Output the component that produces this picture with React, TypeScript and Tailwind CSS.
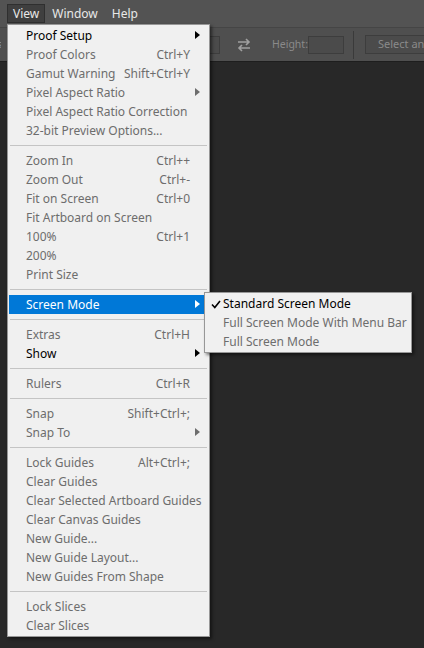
import { ReactNode } from 'react'

type Item = { label: string; shortcut?: string; enabled?: boolean; sub?: boolean; active?: boolean }
type Entry = Item | 'sep'

const items: Entry[] = [
  { label: 'Proof Setup', enabled: true, sub: true },
  { label: 'Proof Colors', shortcut: 'Ctrl+Y' },
  { label: 'Gamut Warning', shortcut: 'Shift+Ctrl+Y' },
  { label: 'Pixel Aspect Ratio', sub: true },
  { label: 'Pixel Aspect Ratio Correction' },
  { label: '32-bit Preview Options...' },
  'sep',
  { label: 'Zoom In', shortcut: 'Ctrl++' },
  { label: 'Zoom Out', shortcut: 'Ctrl+-' },
  { label: 'Fit on Screen', shortcut: 'Ctrl+0' },
  { label: 'Fit Artboard on Screen' },
  { label: '100%', shortcut: 'Ctrl+1' },
  { label: '200%' },
  { label: 'Print Size' },
  'sep',
  { label: 'Screen Mode', enabled: true, sub: true, active: true },
  'sep',
  { label: 'Extras', shortcut: 'Ctrl+H' },
  { label: 'Show', enabled: true, sub: true },
  'sep',
  { label: 'Rulers', shortcut: 'Ctrl+R' },
  'sep',
  { label: 'Snap', shortcut: 'Shift+Ctrl+;' },
  { label: 'Snap To', sub: true },
  'sep',
  { label: 'Lock Guides', shortcut: 'Alt+Ctrl+;' },
  { label: 'Clear Guides' },
  { label: 'Clear Selected Artboard Guides' },
  { label: 'Clear Canvas Guides' },
  { label: 'New Guide...' },
  { label: 'New Guide Layout...' },
  { label: 'New Guides From Shape' },
  'sep',
  { label: 'Lock Slices' },
  { label: 'Clear Slices' },
]

function Arrow({ color }: { color: string }) {
  return (
    <svg width="5" height="8" viewBox="0 0 5 8" className="absolute right-[8px] top-[5px]">
      <path d="M0 0 L5 4 L0 8 Z" fill={color} />
    </svg>
  )
}

function Row({ item }: { item: Item }) {
  const color = item.active ? 'text-white' : item.enabled ? 'text-black' : 'text-[#6d6d6d]'
  return (
    <div className={`relative h-[19px] mx-[1px] flex items-center pl-[17px] pr-[18px] ${item.active ? 'bg-[#0078d7]' : ''} ${color}`}>
      <span className="flex-1 whitespace-nowrap">{item.label}</span>
      {item.shortcut && <span className="whitespace-nowrap">{item.shortcut}</span>}
      {item.sub && <Arrow color={item.active ? '#ffffff' : item.enabled ? '#000000' : '#6d6d6d'} />}
    </div>
  )
}

function Sep() {
  return (
    <div className="h-[11px] flex items-center px-[2px]">
      <div className="h-px w-full bg-[#c4c4c4]" />
    </div>
  )
}

function Box({ w, children }: { w: string; children?: ReactNode }) {
  return <div className={`${w} h-[18px] border border-[#3d3d3d] bg-[#4b4b4b] shrink-0`}>{children}</div>
}

export default function App() {
  return (
    <div
      className="relative w-[424px] h-[648px] bg-[#282828] overflow-hidden text-[12px]"
      style={{ fontFamily: '"Noto Sans", "Open Sans", sans-serif' }}
    >
      {/* menu bar */}
      <div className="h-[27px] bg-[#535353] flex items-center pl-[7px] text-[#e8e8e8] text-[12px]">
        <div className="h-[19px] px-[5px] flex items-center bg-[#3f3f3f] border border-[#2f2f2f]">View</div>
        <div className="pl-[7px] pr-[7px]">Window</div>
        <div className="pl-[7px]">Help</div>
      </div>
      {/* options bar */}
      <div className="h-[35px] bg-[#4f4f4f] border-t border-[#454545] border-b border-b-[#1e1e1e] flex items-center text-[#8a8a8a] whitespace-nowrap overflow-hidden">
        <span className="w-[4px] overflow-hidden shrink-0 text-[11px] -ml-[3px]">s</span>
        <div className="ml-[199px]"><Box w="w-[20px]" /></div>
        <svg width="16" height="14" viewBox="0 0 16 14" className="ml-[16px] shrink-0">
          <path d="M2 4 H13 M10 1 L13 4 L10 7" stroke="#a0a0a0" strokeWidth="1.6" fill="none" />
          <path d="M14 10 H3 M6 7 L3 10 L6 13" stroke="#a0a0a0" strokeWidth="1.6" fill="none" />
        </svg>
        <span className="ml-[20px] w-[36px] text-[10.5px] shrink-0">Height:</span>
        <Box w="w-[36px]" />
        <div className="ml-[9px] w-px h-[28px] bg-[#3a3a3a] shrink-0" />
        <div className="ml-[11px] h-[19px] pl-[12px] pr-[20px] border border-[#3d3d3d] bg-[#4b4b4b] flex items-center text-[11px] shrink-0">Select and Mask...</div>
      </div>

      {/* view menu */}
      <div className="absolute left-[7px] top-[24px] w-[203px] bg-[#f0f0f0] border border-[#979797] shadow-[2px_2px_3px_rgba(0,0,0,0.5)] py-[1px]">
        {items.map((it, i) => (it === 'sep' ? <Sep key={i} /> : <Row key={i} item={it} />))}
      </div>

      {/* submenu */}
      <div className="absolute left-[204px] top-[292px] w-[208px] bg-[#f0f0f0] border border-[#979797] shadow-[2px_2px_3px_rgba(0,0,0,0.5)] py-[1px]">
        <div className="relative h-[19px] flex items-center pl-[18px] text-black">
          <svg width="10" height="9" viewBox="0 0 10 9" className="absolute left-[6px] top-[6px]">
            <path d="M1 4.5 L3.8 7.5 L9 1" stroke="#000" strokeWidth="1.6" fill="none" />
          </svg>
          Standard Screen Mode
        </div>
        <div className="h-[19px] flex items-center pl-[18px] text-[#6d6d6d]">Full Screen Mode With Menu Bar</div>
        <div className="h-[19px] flex items-center pl-[18px] text-[#6d6d6d]">Full Screen Mode</div>
      </div>
    </div>
  )
}
